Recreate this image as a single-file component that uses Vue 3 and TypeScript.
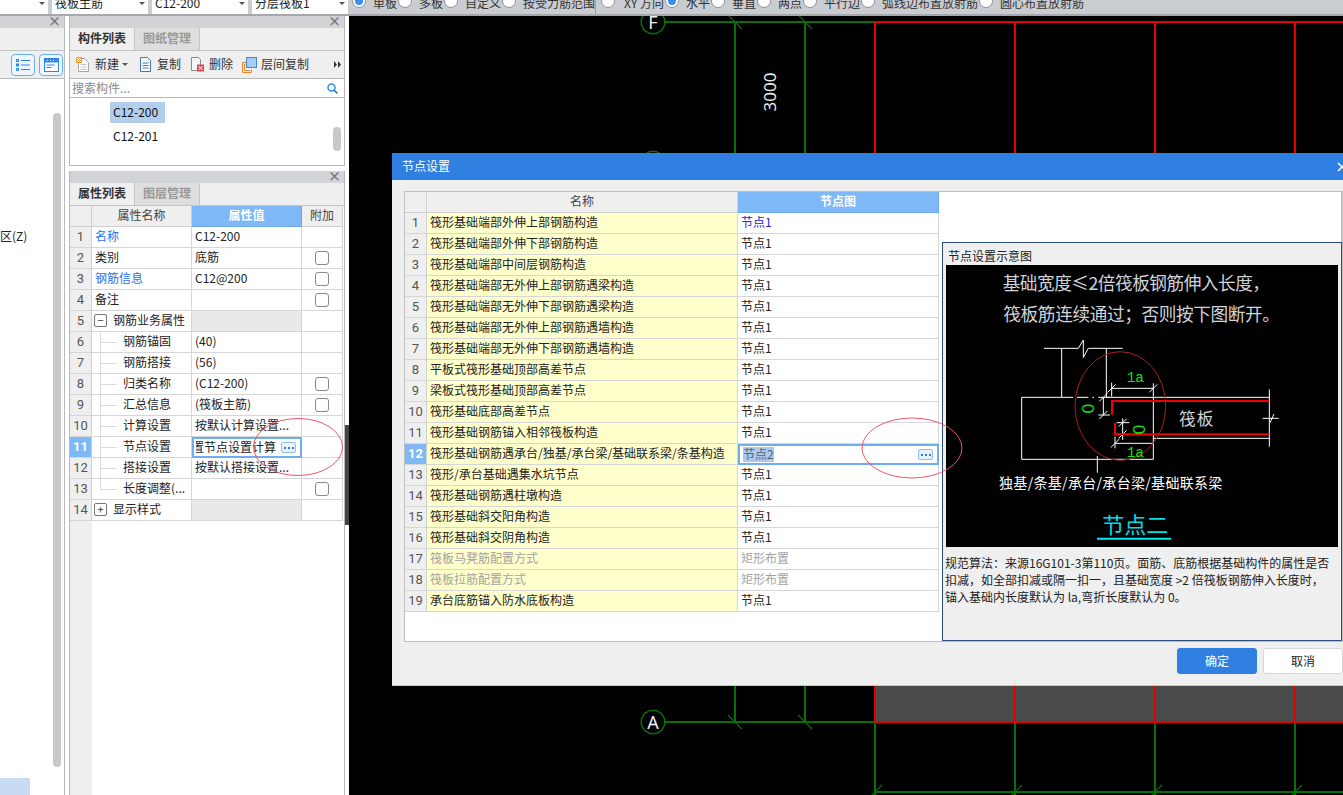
<script setup lang="ts">
interface PropRow {
  n: number
  name: string
  val: string
  kind: 'plain' | 'link' | 'group' | 'child'
  check?: boolean
  open?: boolean
  last?: boolean
  active?: boolean
}

const propRows: PropRow[] = [
  { n: 1, name: '名称', val: 'C12-200', kind: 'link' },
  { n: 2, name: '类别', val: '底筋', kind: 'plain', check: true },
  { n: 3, name: '钢筋信息', val: 'C12@200', kind: 'link', check: true },
  { n: 4, name: '备注', val: '', kind: 'plain', check: true },
  { n: 5, name: '钢筋业务属性', val: '', kind: 'group', open: true },
  { n: 6, name: '钢筋锚固', val: '(40)', kind: 'child' },
  { n: 7, name: '钢筋搭接', val: '(56)', kind: 'child' },
  { n: 8, name: '归类名称', val: '(C12-200)', kind: 'child', check: true },
  { n: 9, name: '汇总信息', val: '(筏板主筋)', kind: 'child', check: true },
  { n: 10, name: '计算设置', val: '按默认计算设置...', kind: 'child' },
  { n: 11, name: '节点设置', val: '按设置节点设置计算', kind: 'child', active: true },
  { n: 12, name: '搭接设置', val: '按默认搭接设置...', kind: 'child' },
  { n: 13, name: '长度调整(...', val: '', kind: 'child', check: true, last: true },
  { n: 14, name: '显示样式', val: '', kind: 'group', open: false },
]

const nodeRows = [
  '筏形基础端部外伸上部钢筋构造',
  '筏形基础端部外伸下部钢筋构造',
  '筏形基础端部中间层钢筋构造',
  '筏形基础端部无外伸上部钢筋遇梁构造',
  '筏形基础端部无外伸下部钢筋遇梁构造',
  '筏形基础端部无外伸上部钢筋遇墙构造',
  '筏形基础端部无外伸下部钢筋遇墙构造',
  '平板式筏形基础顶部高差节点',
  '梁板式筏形基础顶部高差节点',
  '筏形基础底部高差节点',
  '筏形基础钢筋锚入相邻筏板构造',
  '筏形基础钢筋遇承台/独基/承台梁/基础联系梁/条基构造',
  '筏形/承台基础遇集水坑节点',
  '筏形基础钢筋遇柱墩构造',
  '筏形基础斜交阳角构造',
  '筏形基础斜交阴角构造',
  '筏板马凳筋配置方式',
  '筏板拉筋配置方式',
  '承台底筋锚入防水底板构造',
].map((name, i) => {
  const n = i + 1
  const off = n === 17 || n === 18
  return { n, name, val: off ? '矩形布置' : n === 12 ? '节点2' : '节点1', off }
})

const selects = [
  { label: '', cls: 'sel-a' },
  { label: '筏板主筋', cls: 'sel-b' },
  { label: 'C12-200', cls: 'sel-b' },
  { label: '分层筏板1', cls: 'sel-b' },
]

const radiosA = [
  { label: '单板', on: true },
  { label: '多板', on: false },
  { label: '自定义', on: false },
  { label: '按受力筋范围', on: false },
]
const radiosB = [
  { label: 'XY 方向', on: false },
  { label: '水平', on: true },
  { label: '垂直', on: false },
  { label: '两点', on: false },
  { label: '平行边', on: false },
  { label: '弧线边布置放射筋', on: false },
  { label: '圆心布置放射筋', on: false },
]

function ring(cx: number, cy: number, r: number): string {
  const pts: string[] = []
  for (let i = 0; i < 12; i++) {
    const a = (Math.PI * 2 * i) / 12 + Math.PI / 12
    pts.push(`${(cx + r * Math.cos(a)).toFixed(1)},${(cy + r * Math.sin(a)).toFixed(1)}`)
  }
  return pts.join(' ')
}

const redCols = [875, 1015, 1155, 1295]
</script>

<template>
  <div class="app">
    <div class="topbar">
      <div v-for="(s, i) in selects" :key="i" class="sel" :class="s.cls">
        <span class="sel-text">{{ s.label }}</span>
        <i class="caret"></i>
      </div>
      <div class="radios first">
        <label v-for="r in radiosA" :key="r.label" class="radio">
          <i class="dot" :class="{ on: r.on }"></i><span>{{ r.label }}</span>
        </label>
      </div>
      <i class="tb-sep"></i>
      <div class="radios">
        <label v-for="r in radiosB" :key="r.label" class="radio">
          <i class="dot" :class="{ on: r.on }"></i><span :class="{ xy: r.label.startsWith('XY') }">{{ r.label }}</span>
        </label>
      </div>
    </div>

    <div class="main">
      <aside class="left">
        <div class="pane-head"><span class="x">×</span></div>
        <div class="left-strip"></div>
        <div class="left-tools">
          <button class="view-btn">
            <svg width="14" height="14" viewBox="0 0 14 14">
              <g fill="none" stroke="#2f86e6">
                <rect x="0.5" y="1.5" width="2" height="2" />
                <rect x="0.5" y="6" width="2" height="2" />
                <rect x="0.5" y="10.5" width="2" height="2" />
                <path d="M5 2.5h9M5 7h9M5 11.5h9" />
              </g>
            </svg>
          </button>
          <button class="view-btn">
            <svg width="15" height="14" viewBox="0 0 15 14">
              <rect x="0.5" y="0.5" width="14" height="13" fill="#fff" stroke="#2f86e6" />
              <rect x="0.5" y="0.5" width="14" height="4" fill="#2f86e6" />
              <path d="M3 2.5h1M6 2.5h1M9 2.5h1" stroke="#fff" />
              <path d="M2.5 7h8M2.5 9.5h5" stroke="#2f86e6" />
            </svg>
          </button>
        </div>
        <div class="left-body">
          <div class="zone">区(Z)</div>
          <div class="left-pick"></div>
          <i class="left-scroll"></i>
        </div>
      </aside>

      <section class="mid">
        <div class="panel list-panel">
          <div class="pane-head"><span class="x">×</span></div>
          <div class="tabs">
            <span class="tab on">构件列表</span>
            <span class="tab">图纸管理</span>
          </div>
          <div class="toolbar">
            <span class="tool t-new">
              <svg width="14" height="16" viewBox="0 0 14 16">
                <path d="M2.5 1.5h6l4 4v9h-10z" fill="#fff" stroke="#a8a8a8" />
                <path d="M4.5 7.5h6M4.5 10h6M4.5 12.5h6" stroke="#c4c4c4" />
                <rect x="0" y="0" width="6" height="6" fill="#f2a33a" />
                <path d="M1 1h1v1H1zM3 1h1v1H3zM2 2h1v1H2zM4 2h1v1H4zM1 3h1v1H1zM3 3h1v1H3zM2 4h1v1H2zM4 4h1v1H4z" fill="#fff" />
              </svg>
              <span>新建</span><i class="caret tool-caret"></i>
            </span>
            <span class="tool t-copy">
              <svg width="13" height="15" viewBox="0 0 13 15">
                <path d="M1.5 0.5h7l3 3v11h-10z" fill="#fff" stroke="#3f78b8" />
                <path d="M3.5 6h6M3.5 8.5h6M3.5 11h6" stroke="#3f78b8" />
              </svg>
              <span>复制</span>
            </span>
            <span class="tool t-del">
              <svg width="15" height="15" viewBox="0 0 15 15">
                <path d="M1.5 0.5h7l2 2v11h-9z" fill="#f4f4f4" stroke="#8a8a8a" />
                <rect x="7" y="7.500" width="7" height="7" fill="#d94a4a" />
                <path d="M8.500 9l4 4M12.500 9l-4 4" stroke="#fff" />
              </svg>
              <span>删除</span>
            </span>
            <span class="tool t-floor">
              <svg width="15" height="16" viewBox="0 0 15 16">
                <path d="M4.500 5.500h-4v10h9v-3" fill="none" stroke="#e8862a" />
                <path d="M2.500 7v6.500H8" fill="none" stroke="#e8862a" />
                <rect x="4.500" y="0.500" width="10" height="10" fill="#a9cdf5" stroke="#3f86d8" />
              </svg>
              <span>层间复制</span>
            </span>
            <span class="more">
              <svg width="7" height="7" viewBox="0 0 7 7"><path d="M0 0l3 3.500L0 7zM4 0l3 3.500L4 7z" fill="#333" /></svg>
            </span>
          </div>
          <div class="search">
            <span class="ph">搜索构件...</span>
            <svg width="11" height="11" viewBox="0 0 11 11">
              <circle cx="4.500" cy="4.500" r="3.500" fill="none" stroke="#2f8fd8" stroke-width="1.500" />
              <path d="M7 7l3.500 3.500" stroke="#2f8fd8" stroke-width="1.800" />
            </svg>
          </div>
          <div class="list">
            <div class="item sel-item">C12-200</div>
            <div class="item">C12-201</div>
            <i class="list-scroll"></i>
          </div>
        </div>

        <div class="panel prop-panel">
          <div class="pane-head"><span class="x">×</span></div>
          <div class="tabs">
            <span class="tab on">属性列表</span>
            <span class="tab">图层管理</span>
          </div>
          <div class="prop-grid">
            <div class="h-cell"></div>
            <div class="h-cell">属性名称</div>
            <div class="h-cell h-on">属性值</div>
            <div class="h-cell">附加</div>
            <template v-for="r in propRows" :key="r.n">
              <div class="num" :class="{ 'num-on': r.active }">{{ r.n }}</div>
              <div class="pc name" :class="[r.kind]">
                <template v-if="r.kind === 'group'">
                  <i class="expander">{{ r.open ? '−' : '+' }}</i>
                </template>
                <template v-if="r.kind === 'child'">
                  <i class="tree-v" :class="{ end: r.last }"></i><i class="tree-h"></i>
                </template>
                <span>{{ r.name }}</span>
              </div>
              <div class="pc val" :class="{ 'val-group': r.kind === 'group', 'val-active': r.active }">
                <span class="val-text">{{ r.val }}</span>
                <i v-if="r.active" class="dots"></i>
              </div>
              <div class="pc extra"><i v-if="r.check" class="check"></i></div>
            </template>
          </div>
          <div class="prop-rest"><i></i></div>
        </div>
      </section>

      <div class="rail"><i class="rail-grip"></i></div>

      <div class="canvas">
        <svg class="cad" width="994" height="779" viewBox="349 16 994 779">
          <rect x="875" y="686" width="468" height="36" fill="#4a4a4a" />
          <g fill="none" stroke="#0a6e0a">
            <polygon :points="ring(653, 22, 12)" stroke-width="1.500" />
            <polygon :points="ring(653, 163, 12)" stroke-width="1.500" />
            <polygon :points="ring(653, 722, 12)" stroke-width="1.500" />
            <path d="M665 22H875M665 722H875" stroke-width="2" />
            <path d="M735 22V153M735 686V722" stroke-width="2" />
            <path d="M805 22V153M805 686V722" stroke-width="2" />
            <path d="M728 15l14 14M798 15l14 14M728 715l14 14M798 715l14 14" stroke-width="1.200" />
            <path d="M875 722V795M1015 722V795M1155 722V795M1295 722V795" stroke-width="2" />
            <path d="M875 792H1343" stroke-width="2" />
            <path d="M868 799l14-14M1008 799l14-14M1148 799l14-14M1288 799l14-14" stroke-width="1.200" />
          </g>
          <g fill="none" stroke="#e60000" stroke-width="2">
            <path d="M875 22H1343" />
            <path d="M875 722H1343" />
            <path v-for="x in redCols" :key="x" :d="`M${x} 22V153M${x} 686V722`" />
          </g>
          <text x="653" y="29" class="axis">F</text>
          <text x="653" y="729" class="axis">A</text>
          <text x="770" y="98" class="dim" transform="rotate(-90 770 92)">3000</text>
        </svg>
      </div>
    </div>

    <div class="dialog">
      <header class="dlg-title">
        <span>节点设置</span>
        <svg width="10" height="10" viewBox="0 0 10 10"><path d="M1 1l8 8M9 1l-8 8" stroke="#fff" stroke-width="1.500" /></svg>
      </header>
      <div class="dlg-body">
        <div class="node-box">
          <div class="node-grid">
            <div class="h-cell"></div>
            <div class="h-cell">名称</div>
            <div class="h-cell h-on">节点图</div>
            <template v-for="r in nodeRows" :key="r.n">
              <div class="num" :class="{ 'num-on': r.n === 12 }">{{ r.n }}</div>
              <div class="pc yellow" :class="{ off: r.off }">{{ r.name }}</div>
              <div class="pc node-val" :class="{ off: r.off, first: r.n === 1, 'val-active': r.n === 12 }">
                <span :class="{ picked: r.n === 12 }">{{ r.val }}</span>
                <i v-if="r.n === 12" class="dots"></i>
              </div>
            </template>
          </div>
          <aside class="preview">
            <div class="pv-label">节点设置示意图</div>
            <svg class="figure" width="392" height="282" viewBox="18 75 1176 846">
              <rect x="18" y="75" width="1176" height="846" fill="#000" />
              <text x="188" y="150" class="f-title" textLength="802" lengthAdjust="spacing">基础宽度≤2倍筏板钢筋伸入长度，</text>
              <text x="190" y="243" class="f-title" textLength="830" lengthAdjust="spacing">筏板筋连续通过；否则按下图断开。</text>
              <g fill="none" stroke="#fff" stroke-width="3">
                <path d="M312 325H415L430 300V352L445 325H548" />
                <path d="M365 325V472M499 325V472" />
                <path d="M365 472H245V658H640V472M499 472H988M640 595H988M988 448V620" />
                <path d="M365 472H462" stroke-dasharray="34 12" />
                <path d="M472 648V698" />
                <path d="M968 535H1016M990 548L1002 522" />
                <path d="M515 445H640M515 428V470M640 430V470M503 457l24-24M628 457l24-24" />
                <path d="M525 610H640M525 590V625M512 623l26-26" />
                <path d="M475 472H510M475 525H510M490 472V525M478 484l24-24M478 537l24-24" />
                <path d="M530 548H568M530 583H568M548 535V600M536 560l24-24M536 595l24-24" />
              </g>
              <path d="M516 524V483H988M525 548V583H988" fill="none" stroke="#f00000" stroke-width="6" />
              <ellipse cx="541" cy="498" rx="136" ry="163" fill="none" stroke="#a82020" stroke-width="3" />
              <text x="560" y="425" class="f-green" textLength="52" lengthAdjust="spacingAndGlyphs">1a</text>
              <text x="560" y="650" class="f-green" textLength="52" lengthAdjust="spacingAndGlyphs">1a</text>
              <text x="444" y="506" class="f-zero" transform="rotate(90 444 506)" dy="19">0</text>
              <text x="597" y="569" class="f-zero" transform="rotate(90 597 569)" dy="19">0</text>
              <text x="717" y="555" class="f-slab" textLength="103" lengthAdjust="spacing">筏板</text>
              <text x="177" y="743" class="f-sub" textLength="670" lengthAdjust="spacing">独基/条基/承台/承台梁/基础联系梁</text>
              <text x="487" y="878" class="f-node" textLength="198" lengthAdjust="spacing">节点二</text>
              <path d="M471 896H693" stroke="#00e8f0" stroke-width="6" />
            </svg>
            <p class="pv-note">规范算法：来源16G101-3第110页。面筋、底筋根据基础构件的属性是否<br />扣减，如全部扣减或隔一扣一，且基础宽度 &gt;2 倍筏板钢筋伸入长度时，<br />锚入基础内长度默认为 la,弯折长度默认为 0。</p>
          </aside>
        </div>
        <footer class="dlg-foot">
          <button class="btn primary">确定</button>
          <button class="btn">取消</button>
        </footer>
      </div>
    </div>

    <svg class="marks" width="1343" height="795" viewBox="0 0 1343 795">
      <ellipse cx="298" cy="447" rx="44.500" ry="28.500" />
      <ellipse cx="912" cy="448" rx="50" ry="30" />
    </svg>
  </div>
</template>

<style scoped>
.app {
  position: relative;
  width: 1343px;
  height: 795px;
  overflow: hidden;
  background: #fff;
  color: #222;
  font: 12px/1.2 "Noto Sans CJK SC", "Noto Sans", sans-serif;
}
i { font-style: normal; display: block; }
button { font: inherit; padding: 0; cursor: default; }

/* top bar */
.topbar {
  height: 16px;
  box-sizing: border-box;
  display: flex;
  align-items: flex-end;
  background: #c9ccd1;
  border-bottom: 2px solid #a6a8ac;
  overflow: hidden;
}
.sel {
  position: relative;
  height: 14px;
  flex: none;
  background: #fff;
  overflow: hidden;
}
.sel-a { width: 48px; }
.sel-b { width: 96px; margin-left: 4px; }
.sel-text {
  position: absolute;
  left: 3px;
  top: -6px;
  white-space: nowrap;
  line-height: 18px;
  font-size: 12px;
}
.caret {
  position: absolute;
  right: 3px;
  top: 2px;
  width: 0;
  height: 0;
  border: 3px solid transparent;
  border-top: 3px solid #555;
  border-bottom: 0;
}
.radios {
  display: flex;
  gap: 1px;
  height: 14px;
}
.radios.first { margin-left: 4px; }
.radio {
  position: relative;
  display: flex;
  gap: 7px;
  align-items: flex-end;
  height: 14px;
  white-space: nowrap;
}
.radio span {
  position: relative;
  top: -4px;
  line-height: 14px;
  color: #333;
}
.radio span.xy { padding-left: 2px; }
.dot {
  position: relative;
  top: -6px;
  flex: none;
  width: 14px;
  height: 14px;
  box-sizing: border-box;
  background: #fff;
  border: 1px solid #8f9297;
  border-radius: 50%;
}
.dot.on::after {
  content: "";
  position: absolute;
  left: 2px;
  top: 2px;
  width: 8px;
  height: 8px;
  border-radius: 50%;
  background: #3b8df0;
}
.tb-sep {
  width: 1px;
  height: 14px;
  margin: 0 5px 0 0;
  background: #9d9fa3;
}

/* layout */
.main {
  display: flex;
  height: 779px;
}
.left {
  width: 65px;
  flex: none;
  display: flex;
  flex-direction: column;
  box-sizing: border-box;
  border-right: 1px solid #b8b8b8;
}
.pane-head {
  position: relative;
  height: 12px;
  flex: none;
  background: #d2d3d7;
}
.x {
  position: absolute;
  right: 3px;
  top: -1px;
  font-size: 13px;
  line-height: 12px;
  color: #777;
  font-weight: 700;
}
.left-strip {
  height: 22px;
  flex: none;
  background: #efefef;
  border-bottom: 1px solid #c4c4c4;
}
.left-tools {
  height: 27px;
  flex: none;
  display: flex;
  align-items: center;
  gap: 4px;
  padding-left: 11px;
  background: #efefef;
  border-bottom: 1px solid #b8b8b8;
}
.view-btn {
  width: 24px;
  height: 22px;
  flex: none;
  display: flex;
  align-items: center;
  justify-content: center;
  border: 1px solid #6aaef0;
  border-radius: 4px;
  background: #eef5fd;
}
.left-body {
  position: relative;
  flex: 1;
  display: flex;
  flex-direction: column;
  overflow: hidden;
}
.zone {
  margin-top: 149px;
  font-size: 12px;
  line-height: 16px;
}
.left-pick {
  margin-top: auto;
  width: 30px;
  height: 17px;
  background: #c9daf3;
}
.left-scroll {
  position: absolute;
  left: 53px;
  top: 34px;
  width: 8px;
  height: 654px;
  border-radius: 4px;
  background: #c8c8c8;
}
.mid {
  width: 276px;
  margin-left: 4px;
  flex: none;
  display: flex;
  flex-direction: column;
  gap: 5px;
}
.panel {
  box-sizing: border-box;
  border: 1px solid #b8b8b8;
  border-top: 0;
  display: flex;
  flex-direction: column;
}
.list-panel { height: 150px; }
.prop-panel { flex: 1; border-bottom: 0; }
.tabs {
  height: 22px;
  flex: none;
  display: flex;
  background: #efefef;
  border-bottom: 1px solid #c4c4c4;
}
.tab {
  width: 65px;
  box-sizing: border-box;
  text-align: center;
  line-height: 20px;
  font-weight: 700;
  color: #999;
  background: #dedede;
  border-right: 1px solid #c4c4c4;
}
.tab.on {
  color: #333;
  background: #efefef;
}
.toolbar {
  position: relative;
  height: 27px;
  flex: none;
  display: flex;
  align-items: center;
  padding-left: 6px;
  background: #efefef;
  border-bottom: 1px solid #b8b8b8;
  color: #333;
}
.tool {
  flex: none;
  display: flex;
  align-items: center;
  gap: 5px;
  white-space: nowrap;
}
.tool svg { flex: none; }
.tool-caret {
  position: static;
  margin-left: -2px;
  margin-right: 0;
}
.t-new { gap: 5px; }
.t-copy { margin-left: 11px; }
.t-del { margin-left: 9px; gap: 4px; }
.t-floor { margin-left: 9px; gap: 4px; }
.more { margin-left: auto; margin-right: 3px; display: flex; }
.search {
  height: 19px;
  flex: none;
  box-sizing: border-box;
  display: flex;
  align-items: center;
  justify-content: space-between;
  padding: 0 6px 0 2px;
  background: #fff;
  border-bottom: 1px solid #b8b8b8;
}
.ph { color: #8a8a8a; }
.list {
  position: relative;
  flex: 1;
  padding-top: 4px;
  background: #fff;
}
.item {
  width: 55px;
  height: 21px;
  margin: 0 0 3px 40px;
  padding-left: 3px;
  box-sizing: border-box;
  line-height: 19px;
  color: #111;
}
.sel-item { background: #b3cdec; }
.list-scroll {
  position: absolute;
  left: 263px;
  top: 29px;
  width: 8px;
  height: 24px;
  border-radius: 4px;
  background: #c8c8c8;
}

/* grids */
.prop-grid {
  display: grid;
  grid-template-columns: 22px 100px 110px 41px;
  grid-auto-rows: 21px;
  flex: none;
}
.node-grid {
  display: grid;
  grid-template-columns: 22px 311px 201px;
  grid-auto-rows: 21px;
  flex: none;
  width: 534px;
  align-self: flex-start;
}
.h-cell {
  box-sizing: border-box;
  display: flex;
  align-items: center;
  justify-content: center;
  padding-bottom: 2px;
  background: #efefef;
  color: #444;
  border-right: 1px solid #cfcfcf;
  border-bottom: 1px solid #cfcfcf;
}
.h-on {
  background: #7eb8f7;
  color: #fff;
  font-weight: 700;
  border-color: #6ea8e8;
}
.num {
  box-sizing: border-box;
  display: flex;
  align-items: center;
  justify-content: center;
  padding-bottom: 2px;
  background: #efefef;
  color: #555;
  font: 13px "Roboto", sans-serif;
  border-right: 1px solid #cfcfcf;
  border-bottom: 1px solid #d6d6d6;
}
.num-on {
  background: #7eb8f7;
  color: #fff;
  font-weight: 700;
}
.pc {
  position: relative;
  box-sizing: border-box;
  display: flex;
  align-items: center;
  min-width: 0;
  padding-left: 3px;
  padding-bottom: 2px;
  white-space: nowrap;
  overflow: hidden;
  background: #fff;
  color: #222;
  border-right: 1px solid #d6d6d6;
  border-bottom: 1px solid #d6d6d6;
}
.link { color: #2a6ff0; }
.child { padding-left: 31px; }
.group { padding-left: 2px; gap: 6px; }
.expander {
  width: 13px;
  height: 13px;
  box-sizing: border-box;
  border: 1px solid #777;
  border-radius: 2px;
  text-align: center;
  font-size: 11px;
  line-height: 11px;
  color: #333;
  flex: none;
  background: #fff;
}
.tree-v {
  position: absolute;
  left: 8px;
  top: 0;
  bottom: -1px;
  width: 1px;
  background: #dcdcdc;
}
.tree-v.end { bottom: 10px; }
.tree-h {
  position: absolute;
  left: 8px;
  top: 10px;
  width: 17px;
  height: 1px;
  background: #dcdcdc;
}
.val-group { background: #e9e9e9; }
.val-text { flex: none; }
.val-active {
  border: 2px solid #6eaef0;
  padding-bottom: 0;
  padding-right: 2px;
}
.prop-grid .val-active { padding-left: 2px; }
.prop-grid .val-active .val-text {
  flex: 1 1 0;
  min-width: 0;
  display: flex;
  justify-content: flex-end;
  overflow: hidden;
  margin-right: 5px;
}
.dots {
  flex: none;
  width: 15px;
  height: 11px;
  box-sizing: border-box;
  margin-right: 2px;
  border: 1px solid #8fbdf0;
  border-radius: 2px;
  background: radial-gradient(circle at center, #2f7fd8 0.9px, transparent 1.2px) 1px 50% / 4px 4px repeat-x, #e8f2fc;
}
.extra { justify-content: center; padding-left: 0; padding-bottom: 0; }
.check {
  width: 14px;
  height: 14px;
  box-sizing: border-box;
  border: 1px solid #888;
  border-radius: 3px;
  background: #fff;
}
.prop-rest {
  flex: 1;
  background: #fff;
}
.prop-rest i {
  width: 22px;
  height: 100%;
  background: #efefef;
}
.rail {
  position: relative;
  width: 4px;
  flex: none;
}
.rail-grip {
  position: absolute;
  left: 0;
  top: 409px;
  width: 4px;
  height: 100px;
  background: #444;
}
.canvas {
  flex: 1;
  background: #000;
  overflow: hidden;
}
.cad { display: block; }
.axis {
  fill: #f0f0f0;
  font: 18px "Noto Sans", sans-serif;
  text-anchor: middle;
}
.dim {
  fill: #e8e8e8;
  font: 17px "Noto Sans", sans-serif;
  text-anchor: middle;
}

/* dialog */
.dialog {
  position: absolute;
  left: 392px;
  top: 153px;
  width: 962px;
  height: 533px;
  box-sizing: border-box;
  display: flex;
  flex-direction: column;
  background: #efefef;
  border-bottom: 1px solid #c8c8c8;
}
.dlg-title {
  height: 27px;
  flex: none;
  display: flex;
  align-items: center;
  justify-content: space-between;
  padding: 0 7px 0 10px;
  background: #2f80e0;
  color: #fff;
}
.dlg-body {
  flex: 1;
  display: flex;
  flex-direction: column;
  padding: 11px 0 0 12px;
}
.node-box {
  width: 939px;
  height: 451px;
  box-sizing: border-box;
  display: flex;
  background: #fff;
  border: 1px solid #c0c0c0;
  border-right-width: 2px;
}
.yellow { background: #ffffcc; padding-left: 3px; }
.node-val { padding-left: 3px; }
.node-val.first { color: #2323d8; }
.node-val.val-active { justify-content: space-between; }
.off { color: #a3a3a3; }
.picked { background: #a9c9ee; color: #5a6470; }
.preview {
  flex: none;
  width: 400px;
  margin: 50px -2px 0 3px;
  box-sizing: border-box;
  background: #efefef;
  border: 1px solid #2c4a7c;
  padding: 0 0 0 3px;
  overflow: hidden;
}
.pv-label {
  height: 22px;
  line-height: 25px;
  padding-left: 2px;
  color: #222;
}
.figure { display: block; }
.f-title {
  fill: #cfd4da;
  font-size: 53px;
  font-family: "Noto Sans CJK SC", sans-serif;
}
.f-green {
  fill: #10e010;
  font-size: 46px;
  font-family: "Liberation Mono", monospace;
}
.f-zero {
  fill: #10e010;
  font-size: 52px;
  text-anchor: middle;
  font-family: "Liberation Sans", sans-serif;
}
.f-slab {
  fill: #d0d4d8;
  font-size: 50px;
  font-family: "Noto Sans CJK SC", sans-serif;
}
.f-sub {
  fill: #fff;
  font-size: 42px;
  font-family: "Noto Sans CJK SC", sans-serif;
}
.f-node {
  fill: #00dce8;
  font-size: 66px;
  font-family: "Noto Sans CJK SC", sans-serif;
}
.pv-note {
  margin: 7px 0 0 -1px;
  line-height: 17px;
  white-space: nowrap;
  color: #222;
}
.dlg-foot {
  display: flex;
  gap: 6px;
  padding: 6px 0 0 773px;
}
.btn {
  width: 80px;
  height: 26px;
  flex: none;
  background: #fff;
  color: #222;
  border: 1px solid #d6d6d6;
  border-radius: 3px;
}
.btn.primary {
  background: #2f80e0;
  border-color: #2f80e0;
  color: #fff;
}
.marks {
  position: absolute;
  left: 0;
  top: 0;
  pointer-events: none;
}
.marks ellipse {
  fill: none;
  stroke: #e8586a;
  stroke-width: 1;
}
</style>
